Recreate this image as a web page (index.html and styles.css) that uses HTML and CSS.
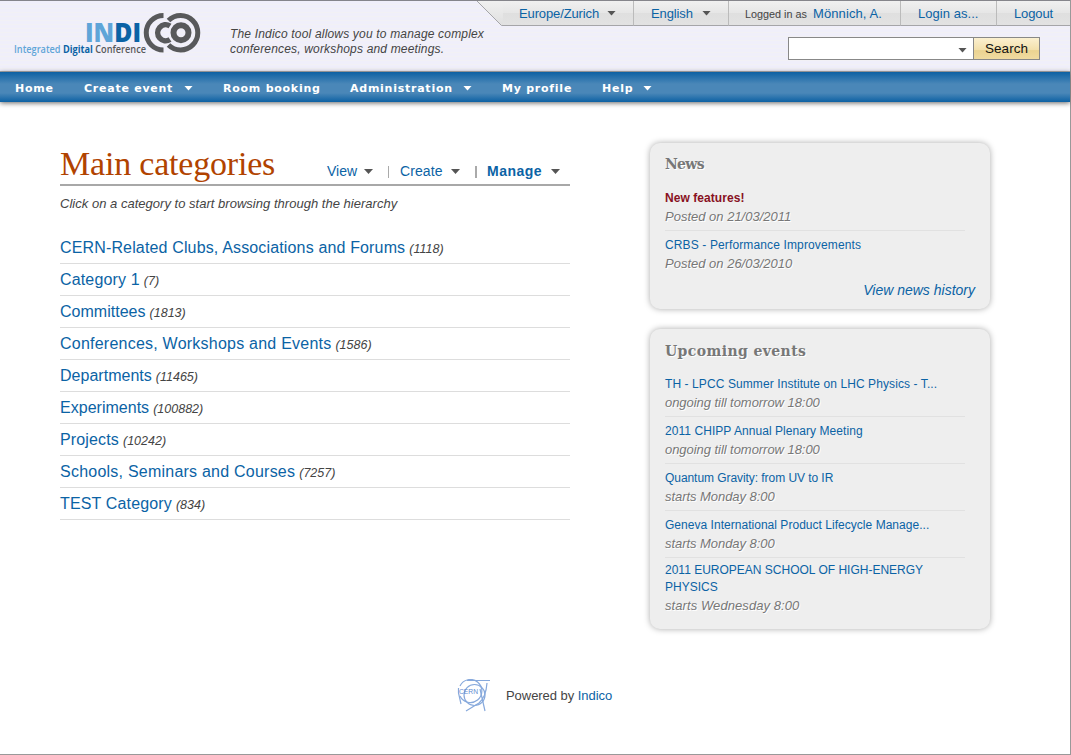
FILE: index.html
```html
<!DOCTYPE html>
<html lang="en">
<head>
<meta charset="utf-8">
<title>Indico - Main categories</title>
<link rel="stylesheet" href="styles.css">
</head>
<body>
<div class="page">
  <header class="header">
    <svg class="logo" width="190" height="48" viewBox="0 0 190 48">
      <text class="logo-name" x="71" y="30" textLength="56" lengthAdjust="spacingAndGlyphs"><tspan fill="#5fa5d8">IN</tspan><tspan fill="#0b63a5">DI</tspan></text>
      <text class="logo-sub" x="0" y="41" textLength="132" lengthAdjust="spacingAndGlyphs"><tspan fill="#5fa5d8">Integrated </tspan><tspan fill="#0b63a5" class="logo-strong">Digital</tspan><tspan fill="#58595b"> Conference</tspan></text>
      <g fill="none" stroke="#58595b">
        <path stroke-width="5" d="M149.500 3.500A17.200 17.200 0 0 0 149.500 38"/>
        <path stroke-width="5" d="M154.500 8.500A17.200 17.200 0 1 1 154.500 33"/>
        <path stroke-width="5.500" d="M156 14A8 8 0 1 0 156 27.500"/>
        <circle cx="167" cy="20.700" r="7.500" stroke-width="6"/>
      </g>
    </svg>
    <p class="tagline"><span class="tag-one">The Indico tool allows you to manage complex</span><br><span class="tag-two">conferences, workshops and meetings.</span></p>
    <div class="tools">
      <div class="session">
        <svg class="slant" width="26" height="25" viewBox="0 0 26 25"><defs><linearGradient id="bar" x1="0" y1="0" x2="0" y2="1"><stop offset="0" stop-color="#f0f0f0"/><stop offset="1" stop-color="#dfdfdf"/></linearGradient></defs><path fill="url(#bar)" d="M0 0L25 24.500H26V0Z"/><path fill="none" stroke="#a5a5a8" d="M0 0L24.500 24.500H26"/></svg>
        <div class="cell zone"><a>Europe/Zurich</a><i class="caret"></i></div>
        <div class="cell lang"><a>English</a><i class="caret"></i></div>
        <div class="cell user"><small>Logged in as</small><a>Mönnich, A.</a></div>
        <div class="cell as"><a>Login as...</a></div>
        <div class="cell out"><a>Logout</a></div>
      </div>
      <div class="search"><div class="field"><i class="caret"></i></div><div class="button">Search</div></div>
    </div>
  </header>
  <nav class="nav">
    <a class="n1">Home</a><a class="n2">Create event<i class="caret"></i></a><a class="n3">Room booking</a><a class="n4">Administration<i class="caret"></i></a><a class="n5">My profile</a><a class="n6">Help<i class="caret"></i></a>
  </nav>
  <main class="main">
    <section class="categories">
      <div class="heading">
        <h1>Main categories</h1>
        <div class="actions"><a class="view">View</a><i class="caret"></i><b class="bar"></b><a class="create">Create</a><i class="caret"></i><b class="bar thick"></b><a class="manage">Manage</a><i class="caret"></i></div>
      </div>
      <p class="hint">Click on a category to start browsing through the hierarchy</p>
      <ul class="list">
        <li><a>CERN-Related Clubs, Associations and Forums</a><em>(1118)</em></li>
        <li><a>Category 1</a><em>(7)</em></li>
        <li class="tight"><a>Committees</a><em>(1813)</em></li>
        <li class="loose"><a>Conferences, Workshops and Events</a><em>(1586)</em></li>
        <li class="tight"><a>Departments</a><em>(11465)</em></li>
        <li class="tight"><a>Experiments</a><em>(100882)</em></li>
        <li><a>Projects</a><em>(10242)</em></li>
        <li class="loose"><a>Schools, Seminars and Courses</a><em>(7257)</em></li>
        <li><a>TEST Category</a><em>(834)</em></li>
      </ul>
    </section>
    <aside class="side">
      <section class="box news">
        <h2>News</h2>
        <div class="item"><a class="hot">New features!</a><em>Posted on 21/03/2011</em></div>
        <div class="item"><a class="crbs">CRBS - Performance Improvements</a><em>Posted on 26/03/2010</em></div>
        <a class="more">View news history</a>
      </section>
      <section class="box events">
        <h2>Upcoming events</h2>
        <div class="item"><a class="e1">TH - LPCC Summer Institute on LHC Physics - T...</a><em>ongoing till tomorrow 18:00</em></div>
        <div class="item"><a class="e2">2011 CHIPP Annual Plenary Meeting</a><em>ongoing till tomorrow 18:00</em></div>
        <div class="item"><a class="e3">Quantum Gravity: from UV to IR</a><em>starts Monday 8:00</em></div>
        <div class="item"><a class="e4">Geneva International Product Lifecycle Manage...</a><em>starts Monday 8:00</em></div>
        <div class="item tall"><a class="e5">2011 EUROPEAN SCHOOL OF HIGH-ENERGY PHYSICS</a><em class="wed">starts Wednesday 8:00</em></div>
      </section>
    </aside>
  </main>
  <footer class="footer">
    <svg width="34" height="34" viewBox="0 0 34 34"><g fill="none" stroke="#87a9dc" stroke-width="1.200"><path d="M3 7A11.500 11.500 0 1 1 3 17"/><circle cx="17.500" cy="16" r="10.500"/><path d="M10 1.500H33M1.500 9V14L4 25M23 10L28 32M30 4Q29 18 22 24L9 32"/></g><text class="cern" x="2" y="14.500" textLength="19" lengthAdjust="spacingAndGlyphs">CERN</text></svg>
    <p>Powered by <a>Indico</a></p>
  </footer>
</div>
</body>
</html>
```
FILE: styles.css
```css
* { box-sizing: border-box; }
body { margin: 0; font-family: "Liberation Sans", Arial, sans-serif; font-size: 13px; color: #444; background: #fff; }
h1, h2, p, ul { margin: 0; padding: 0; font-weight: normal; }
a { color: #0b63a5; }
.page { width: 1071px; height: 755px; border-right: 1px solid #999; border-bottom: 1px solid #999; display: flex; flex-direction: column; }
.caret { display: inline-block; width: 9px; height: 5px; background: #555; clip-path: polygon(0 0, 100% 0, 50% 100%); flex: none; }

.header { height: 72px; border-top: 1px solid #85858b; border-bottom: 1px solid #a3a5a8; background: repeating-linear-gradient(#f0effa 0 3px, #f2f1f5 3px 4px); display: flex; flex: none; }
.logo { margin: 11px 0 0 14px; flex: none; }
.logo-name { font: 800 26px "Open Sans", sans-serif; }
.logo-sub { font: 600 10px "Open Sans", sans-serif; }
.logo-strong { font-weight: bold; }
.tagline { width: 273px; padding: 26px 0 0 26px; font-size: 12px; line-height: 15px; font-style: italic; white-space: nowrap; flex: none; }
.tag-one { letter-spacing: .18px; }
.tag-two { letter-spacing: .17px; }
.tools { flex: 1; }
.session { display: flex; height: 25px; font-size: 13px; }
.slant { flex: none; }
.cell { display: flex; align-items: center; height: 25px; border-right: 1px solid #bbb; border-bottom: 1px solid #a5a5a8; background: linear-gradient(#f0f0f0 0%, #e6e6e6 50%, #dfdfdf 51%, #e2e2e2 100%); white-space: nowrap; flex: none; }
.cell > a { letter-spacing: -.12px; }
.zone { width: 131px; padding-left: 16px; }
.zone a { width: 88px; }
.lang { width: 95px; padding-left: 17px; }
.lang a { width: 51px; }
.user { width: 172px; padding-left: 16px; }
.user small { width: 68px; font-size: 10.8px; padding-top: 1px; }
.user > a { letter-spacing: .1px; }
.as { width: 96px; padding-left: 17px; }
.as > a { letter-spacing: .05px; }
.out { flex: 1; padding-left: 17px; border-right: 0; }
.search { display: flex; height: 23px; width: 252px; margin: 11px 0 0 311px; border: 1px solid #888; }
.field { width: 185px; background: #fff; border-right: 1px solid #888; display: flex; align-items: center; justify-content: flex-end; padding: 3px 6px 0 0; }
.button { flex: 1; line-height: 21px; text-align: center; color: #111; font-size: 13.5px; background: linear-gradient(#fbf0d0 0%, #f3e0ac 55%, #ebd391 60%, #f0dba0 100%); }

.nav { height: 30px; flex: none; display: flex; align-items: center; padding-left: 15px; background: linear-gradient(#0d61a3, #4a87b8 40%, #4a87b8 70%, #0d61a3); box-shadow: 0 1px 5px #666; font: bold 11px "DejaVu Sans", sans-serif; letter-spacing: .75px; }
.nav a { color: #fff; flex: none; white-space: nowrap; display: flex; align-items: center; justify-content: space-between; padding-top: 2px; }
.nav .caret { background: #fff; }
.n1 { margin-right: 31px; width: 38px; }
.n2 { margin-right: 30px; width: 109px; }
.n3 { margin-right: 30px; width: 97px; }
.n4 { margin-right: 30px; width: 122px; }
.n5 { margin-right: 31px; width: 69px; }
.n6 { width: 50px; }

.main { display: flex; padding: 41px 0 0 60px; height: 572px; flex: none; }
.categories { width: 510px; }
.heading { height: 43px; border-bottom: 2px solid #a8a8a8; display: flex; justify-content: space-between; }
h1 { font: 34px/42px "Liberation Serif", serif; letter-spacing: -.2px; color: #b14300; white-space: nowrap; }
.actions { display: flex; align-items: center; height: 17px; margin: 19px 10px 0 0; font-size: 14px; }
.actions .caret { margin: 2px 0 0; }
.view { width: 37px; }
.create { width: 51px; letter-spacing: .1px; }
.manage { width: 64px; font-weight: bold; letter-spacing: .5px; }
.bar { width: 1px; height: 12px; background: #aaa; margin: 2px 11px 0 15px; }
.thick { width: 2px; margin: 2px 10px 0 15px; }
.hint { margin-top: 10px; height: 36px; line-height: 16px; font-style: italic; letter-spacing: .02px; }
.list { list-style: none; }
.list li { height: 32px; line-height: 31px; border-bottom: 1px solid #ddd; font-size: 16px; letter-spacing: .15px; white-space: nowrap; }
.list .loose { letter-spacing: .23px; }
.list .tight { letter-spacing: .02px; }
.list em { font-size: 12.5px; letter-spacing: 0; margin-left: 4px; }

.side { margin-left: 80px; width: 340px; }
.box { background: #eee; border-radius: 10px; box-shadow: 0 0 6px #aaa; padding: 12px 15px 0; margin-bottom: 20px; font-size: 12px; }
.news { height: 166px; }
.events { height: 300px; }
h2 { font: bold 14px/18px "DejaVu Serif", serif; color: #777; text-shadow: 1px 1px #fff; height: 29px; white-space: nowrap; }
.news h2 { letter-spacing: -.7px; }
.events { padding-top: 13px; }
.events h2 { letter-spacing: .4px; height: 28px; }
.item { width: 300px; height: 47px; border-bottom: 1px solid #e1e1e1; padding-top: 5px; }
.item a, .item em { display: block; line-height: 18px; }
.item a { white-space: nowrap; letter-spacing: .06px; }
.item .crbs { letter-spacing: .13px; }
.item .e1 { letter-spacing: .09px; }
.item .e3 { letter-spacing: -.06px; }
.item .e4 { letter-spacing: .03px; }
.item em { font-size: 13px; letter-spacing: -.05px; color: #777; text-shadow: 1px 1px #fff; line-height: 19px; white-space: nowrap; }
.news .item em { letter-spacing: 0; }
.item .wed { letter-spacing: .08px; }
.item .hot { font-weight: bold; color: #881122; }
.item.tall { height: 61px; border: 0; padding-top: 4px; }
.item.tall a { white-space: normal; line-height: 17px; letter-spacing: 0; }
.news .item:nth-of-type(2) { border: 0; }
.more { display: block; text-align: right; font-size: 14px; font-style: italic; line-height: 17px; margin-top: 4px; }

.footer { display: flex; margin-left: 457px; padding-top: 4px; align-items: center; height: 39px; }
.footer p { margin-left: 15px; letter-spacing: -.05px; }
.cern { font: 8px "Liberation Sans", sans-serif; fill: #5f8bd0; }
```
